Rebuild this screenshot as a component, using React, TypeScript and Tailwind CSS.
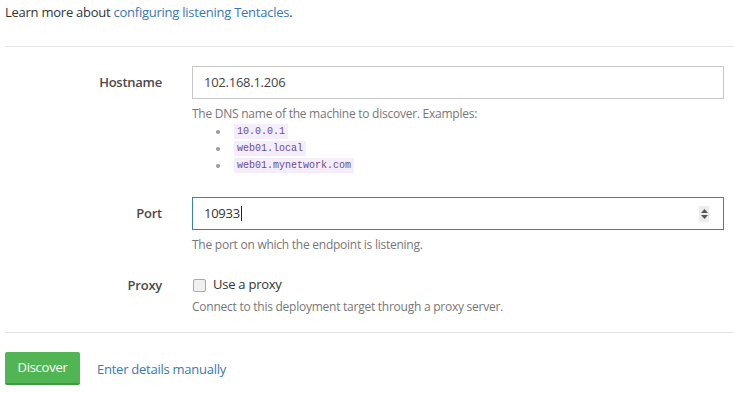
import React from 'react';

const font = "font-['Open_Sans',sans-serif]";
const mono = "font-['Liberation_Mono',monospace]";

const FieldLabel: React.FC<{ children: React.ReactNode; className?: string }> = ({ children, className = '' }) => (
  <div className={`w-[157px] shrink-0 text-right text-[13px] font-semibold text-[#4a4a4a] ${className}`}>{children}</div>
);

const Help: React.FC<{ children: React.ReactNode; className?: string }> = ({ children, className = '' }) => (
  <p className={`text-[12px] leading-[17px] text-[#777] ${className}`}>{children}</p>
);

const examples = ['10.0.0.1', 'web01.local', 'web01.mynetwork.com'];

export default function App() {
  return (
    <div className={`w-[734px] h-[393px] bg-white overflow-hidden tracking-[-0.25px] ${font}`}>
      <p className="pl-[5px] pt-[3px] text-[13px] leading-[18px] text-[#333]">
        Learn more about <a className="text-[#3a78b5]">configuring listening Tentacles</a>.
      </p>

      <div className="ml-[5px] mt-[25px] border-t border-[#e3e3e3]" />

      {/* hostname */}
      <div className="mt-[19px] flex gap-[30px] pl-[5px] pr-[10px]">
        <FieldLabel className="pt-[8px] leading-[17px]">Hostname</FieldLabel>
        <div className="flex-1">
          <div className="h-[33px] border border-[#c8c8c8] flex items-center px-[11px] text-[13px] text-[#444]">
            102.168.1.206
          </div>
          <Help className="mt-[6px]">The DNS name of the machine to discover. Examples:</Help>
          <ul className="mt-[1px] pl-[24px]">
            {examples.map((e) => (
              <li key={e} className="flex items-center h-[17px]">
                <span className="w-[4px] h-[4px] rounded-full bg-[#999] mr-[14px]" />
                <code className={`${mono} text-[10px] tracking-normal leading-[15px] px-[3px] bg-[#f5eefa] text-[#6a4c8c]`}>{e}</code>
              </li>
            ))}
          </ul>
        </div>
      </div>

      {/* port */}
      <div className="mt-[23px] flex gap-[30px] pl-[5px] pr-[10px]">
        <FieldLabel className="pt-[8px] leading-[17px]">Port</FieldLabel>
        <div className="flex-1">
          <div className="h-[33px] border border-[#3a7fb8] flex items-center pl-[11px] pr-[14px] text-[13px] text-[#333]">
            <span>10933</span>
            <span className="w-px h-[15px] bg-[#222] ml-px" />
            <span className="ml-auto w-[10px] h-[16px] bg-[#ececec] flex flex-col items-center justify-center gap-[2px]">
              <svg width="7" height="4" viewBox="0 0 7 4"><path d="M3.5 0L7 4H0z" fill="#555" /></svg>
              <svg width="7" height="4" viewBox="0 0 7 4"><path d="M0 0h7L3.5 4z" fill="#555" /></svg>
            </span>
          </div>
          <Help className="mt-[6px]">The port on which the endpoint is listening.</Help>
        </div>
      </div>

      {/* proxy */}
      <div className="mt-[23px] flex gap-[30px] pl-[5px] pr-[10px]">
        <FieldLabel className="leading-[18px]">Proxy</FieldLabel>
        <div className="flex-1">
          <label className="flex items-center h-[18px] text-[13px] text-[#333]">
            <span className="ml-px w-[13px] h-[13px] rounded-[2px] border border-[#a9a9a9] bg-[#f0f0f0] mr-[7px]" />
            Use a proxy
          </label>
          <Help className="mt-[4px]">Connect to this deployment target through a proxy server.</Help>
        </div>
      </div>

      <div className="ml-[5px] mt-[17px] border-t border-[#e3e3e3]" />

      <div className="mt-[19px] pl-[5px] flex items-center gap-[17px]">
        <button className="w-[75px] h-[33px] bg-[#52b553] border-b-2 border-[#3f9a41] rounded-[2px] text-white text-[13px] pt-[1px]">
          Discover
        </button>
        <a className="text-[13px] text-[#3a78b5] pt-[2px]">Enter details manually</a>
      </div>
    </div>
  );
}
